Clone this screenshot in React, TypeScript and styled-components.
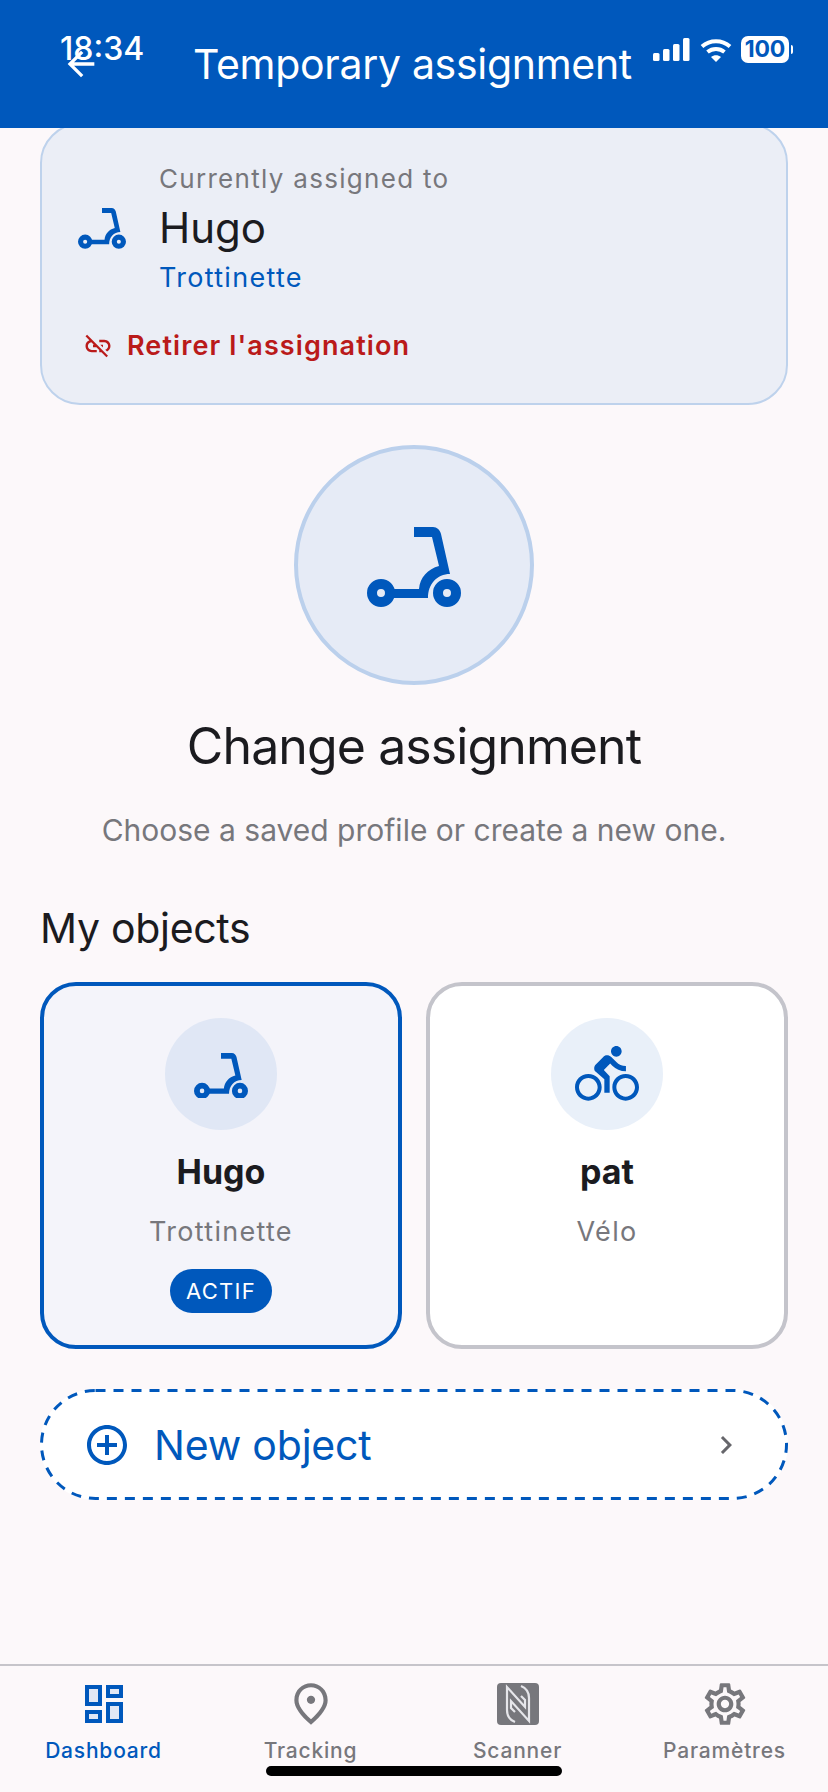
import { createGlobalStyle, styled } from "styled-components";
import {
  MdAddCircleOutline,
  MdArrowBack,
  MdChevronRight,
  MdDirectionsBike,
  MdLinkOff,
  MdOutlinePlace,
  MdOutlineSettings,
} from "react-icons/md";

const BLUE = "#0058bc";
const GREY = "#77777c";
const INK = "#1b1b1f";

const GlobalStyle = createGlobalStyle`
  html, body {
    margin: 0;
    padding: 0;
    background: #fcf8fa;
    font-family: Inter, "Noto Sans", sans-serif;
  }
`;

const Page = styled.div`
  position: relative;
  width: 828px;
  height: 1792px;
  overflow: hidden;
  display: flex;
  flex-direction: column;
  background: #fcf8fa;
`;

const Header = styled.header`
  position: relative;
  z-index: 2;
  flex: none;
  height: 128px;
  background: ${BLUE};
  display: flex;
  align-items: center;
  padding-left: 61px;
  color: #fff;
`;

const BackIcon = styled(MdArrowBack)`
  flex: none;
  width: 40px;
  height: 40px;
`;

const Title = styled.h1`
  margin: 0 0 0 92px;
  font-size: 41px;
  font-weight: 400;
  letter-spacing: -0.3px;
  white-space: nowrap;
`;

const StatusBar = styled.div`
  position: absolute;
  z-index: 3;
  top: 0;
  left: 0;
  right: 0;
  color: #fff;
`;

const Clock = styled.span`
  position: absolute;
  left: 60px;
  top: 30px;
  font-size: 32px;
  line-height: 38px;
  font-weight: 500;
`;

const StatusIcons = styled.div`
  position: absolute;
  left: 653px;
  top: 36px;
  display: flex;
  align-items: center;
  gap: 9px;
`;

const Battery = styled.span`
  position: relative;
  width: 48px;
  height: 27px;
  border-radius: 7px;
  background: #fff;
  color: ${BLUE};
  font-size: 23px;
  line-height: 27px;
  font-weight: 700;
  text-align: center;
  letter-spacing: -0.2px;

  &::after {
    content: "";
    position: absolute;
    right: -4px;
    top: 9px;
    width: 2px;
    height: 9px;
    border-radius: 0 2px 2px 0;
    background: #fff;
  }
`;

const Content = styled.main`
  flex: 1;
  display: flex;
  flex-direction: column;
  padding: 0 40px;
  min-height: 0;
`;

const CurrentCard = styled.section`
  flex: none;
  height: 282px;
  margin-top: -5px;
  box-sizing: border-box;
  padding: 38px 36px 0 36px;
  background: #ebeef6;
  border: 2px solid #bed2ec;
  border-radius: 40px;
`;

const CurrentRow = styled.div`
  display: flex;
  align-items: center;
  gap: 33px;
`;

const CurrentText = styled.div`
  display: flex;
  flex-direction: column;
`;

const CurrentLabel = styled.span`
  font-size: 26px;
  line-height: 32px;
  letter-spacing: 1.3px;
  color: ${GREY};
`;

const CurrentName = styled.span`
  font-size: 42px;
  line-height: 56px;
  margin-top: 5px;
  color: ${INK};
`;

const CurrentKind = styled.span`
  font-size: 27px;
  line-height: 32px;
  margin-top: 6px;
  letter-spacing: 1.3px;
  color: ${BLUE};
`;

const RemoveLink = styled.button`
  display: flex;
  align-items: center;
  gap: 14px;
  margin: 36px 0 0 5px;
  padding: 0;
  border: 0;
  background: none;
  font: inherit;
  font-size: 27px;
  line-height: 32px;
  font-weight: 600;
  letter-spacing: 1.1px;
  color: #ba1a1a;
`;

const Hero = styled.div`
  flex: none;
  align-self: center;
  width: 240px;
  height: 240px;
  margin-top: 40px;
  box-sizing: border-box;
  display: flex;
  align-items: center;
  justify-content: center;
  border: 4px solid #bbd0ec;
  border-radius: 50%;
  background: #e6ebf6;
  color: ${BLUE};
`;

const Heading = styled.h2`
  margin: 32px 0 0;
  font-size: 50px;
  line-height: 58px;
  font-weight: 400;
  letter-spacing: -0.9px;
  text-align: center;
  color: ${INK};
`;

const Subtitle = styled.p`
  margin: 37px 0 0;
  font-size: 30px;
  line-height: 36px;
  text-align: center;
  color: ${GREY};
`;

const SectionTitle = styled.h3`
  margin: 56px 0 0;
  font-size: 41px;
  line-height: 48px;
  font-weight: 400;
  letter-spacing: -0.3px;
  color: ${INK};
`;

const ObjectGrid = styled.div`
  display: grid;
  grid-template-columns: 1fr 1fr;
  gap: 24px;
  margin-top: 30px;
`;

const ObjectCard = styled.div<{ $active?: boolean }>`
  height: 367px;
  box-sizing: border-box;
  padding-top: 32px;
  display: flex;
  flex-direction: column;
  align-items: center;
  background: ${(p) => (p.$active ? "#f4f4fa" : "#fff")};
  border: 4px solid ${(p) => (p.$active ? BLUE : "#c4c4cb")};
  border-radius: 36px;
`;

const ObjectAvatar = styled.div<{ $active?: boolean }>`
  flex: none;
  width: 112px;
  height: 112px;
  display: flex;
  align-items: center;
  justify-content: center;
  border-radius: 50%;
  background: ${(p) => (p.$active ? "#e0e7f5" : "#e9f0f9")};
  color: ${BLUE};
`;

const ObjectName = styled.span`
  margin-top: 22px;
  font-size: 34px;
  line-height: 40px;
  font-weight: 700;
  color: ${INK};
`;

const ObjectKind = styled.span`
  margin-top: 20px;
  font-size: 27px;
  line-height: 40px;
  letter-spacing: 1.3px;
  color: ${GREY};
`;

const Badge = styled.span`
  margin-top: 17px;
  height: 44px;
  padding: 0 16px;
  display: flex;
  align-items: center;
  border-radius: 22px;
  background: ${BLUE};
  color: #fff;
  font-size: 22px;
  letter-spacing: 1.3px;
`;

const NewObject = styled.button`
  position: relative;
  flex: none;
  height: 111px;
  margin-top: 40px;
  padding: 0 44px 0 43px;
  display: flex;
  align-items: center;
  background: #fff;
  border: 0;
  border-radius: 56px;
  font: inherit;
  color: ${BLUE};
`;

// a css dashed border comes out too dense at this width, so the outline is drawn
const DashedOutline = styled.svg`
  position: absolute;
  inset: 0;
  width: 100%;
  height: 100%;
  pointer-events: none;
`;

const NewObjectLabel = styled.span`
  flex: 1;
  margin-left: 23px;
  text-align: left;
  font-size: 41px;
  letter-spacing: -0.2px;
`;

const BottomNav = styled.nav`
  flex: none;
  height: 128px;
  box-sizing: border-box;
  display: grid;
  grid-template-columns: repeat(4, 1fr);
  border-top: 2px solid #c6c4ca;
`;

const NavItem = styled.div<{ $active?: boolean }>`
  display: flex;
  flex-direction: column;
  align-items: center;
  padding-top: 17px;
  color: ${(p) => (p.$active ? BLUE : GREY)};
`;

const NavIconSlot = styled.div`
  height: 42px;
  display: flex;
  align-items: center;
  justify-content: center;
`;

const NavLabel = styled.span`
  margin-top: 12px;
  font-size: 21px;
  line-height: 28px;
  font-weight: 500;
  letter-spacing: 0.8px;
`;

const HomeBar = styled.div`
  position: absolute;
  left: 266px;
  top: 1766px;
  width: 296px;
  height: 10px;
  border-radius: 5px;
  background: #000;
`;

const ScooterSvg = styled.svg<{ $drop?: number }>`
  flex: none;
  margin-top: ${(p) => p.$drop ?? 0}px;
  color: ${BLUE};
`;

const ScooterIcon = ({ width, drop }: { width: number; drop?: number }) => (
  <ScooterSvg $drop={drop} width={width} height={(width * 80) / 94} viewBox="0 0 94 80" fill="currentColor">
    <path d="M47 0H66C70 0 73 3 74 7L83 47C70 47 61 57 61 71H20V62H52C53 50 61 42 72 39L65 10H47Z" />
    <circle cx="14" cy="66" r="9" fill="none" stroke="currentColor" strokeWidth="10" />
    <circle cx="80" cy="66" r="9" fill="none" stroke="currentColor" strokeWidth="10" />
  </ScooterSvg>
);

const SignalIcon = () => (
  <svg width="38" height="24" viewBox="0 0 38 24" fill="#fff">
    <rect x="0" y="15" width="6.5" height="8" rx="1.5" />
    <rect x="10" y="11" width="6.5" height="12" rx="1.5" />
    <rect x="20" y="6" width="6.5" height="17" rx="1.5" />
    <rect x="30" y="0" width="6.5" height="23" rx="1.5" />
  </svg>
);

const WifiIcon = () => (
  <svg width="32" height="24" viewBox="0 0 32 24" fill="none" stroke="#fff" strokeWidth="4">
    <path d="M2 8.5C10 1.5 22 1.5 30 8.5" />
    <path d="M7.5 14C12.5 10 19.5 10 24.5 14" />
    <path d="M16 24l-5-5c3-2.4 7-2.4 10 0z" fill="#fff" stroke="none" />
  </svg>
);

const DashboardIcon = () => (
  <svg width="38" height="38" viewBox="0 0 38 38" fill="#e2e8f5" stroke={BLUE} strokeWidth="4">
    <rect x="2" y="2" width="13" height="17" />
    <rect x="23" y="2" width="13" height="9" />
    <rect x="2" y="27" width="13" height="9" />
    <rect x="23" y="19" width="13" height="17" />
  </svg>
);

const NfcIcon = () => (
  <svg width="42" height="42" viewBox="0 0 42 42">
    <rect width="42" height="42" rx="4" fill={GREY} />
    <g fill="none" stroke="#e6e6ea" strokeWidth="2.2">
      <path d="M18 39C13 37 10 33 10 27V4L28 24V17L24 13" />
      <path d="M24 3C29 5 32 9 32 15V38L14 18V25L18 29" />
    </g>
  </svg>
);

export default function App() {
  return (
    <Page>
      <GlobalStyle />
      <Header>
        <BackIcon />
        <Title>Temporary assignment</Title>
      </Header>
      <StatusBar>
        <Clock>18:34</Clock>
        <StatusIcons>
          <SignalIcon />
          <WifiIcon />
          <Battery>100</Battery>
        </StatusIcons>
      </StatusBar>
      <Content>
        <CurrentCard>
          <CurrentRow>
            <ScooterIcon width={48} />
            <CurrentText>
              <CurrentLabel>Currently assigned to</CurrentLabel>
              <CurrentName>Hugo</CurrentName>
              <CurrentKind>Trottinette</CurrentKind>
            </CurrentText>
          </CurrentRow>
          <RemoveLink>
            <MdLinkOff size={30} />
            Retirer l'assignation
          </RemoveLink>
        </CurrentCard>
        <Hero>
          <ScooterIcon width={94} drop={3} />
        </Hero>
        <Heading>Change assignment</Heading>
        <Subtitle>Choose a saved profile or create a new one.</Subtitle>
        <SectionTitle>My objects</SectionTitle>
        <ObjectGrid>
          <ObjectCard $active>
            <ObjectAvatar $active>
              <ScooterIcon width={54} drop={3} />
            </ObjectAvatar>
            <ObjectName>Hugo</ObjectName>
            <ObjectKind>Trottinette</ObjectKind>
            <Badge>ACTIF</Badge>
          </ObjectCard>
          <ObjectCard>
            <ObjectAvatar>
              <MdDirectionsBike size={64} />
            </ObjectAvatar>
            <ObjectName>pat</ObjectName>
            <ObjectKind>Vélo</ObjectKind>
          </ObjectCard>
        </ObjectGrid>
        <NewObject>
          <DashedOutline>
            <rect
              x="1.5"
              y="1.5"
              width="745"
              height="108"
              rx="54"
              fill="none"
              stroke={BLUE}
              strokeWidth="3"
              strokeDasharray="10 8"
            />
          </DashedOutline>
          <MdAddCircleOutline size={48} />
          <NewObjectLabel>New object</NewObjectLabel>
          <MdChevronRight size={36} color="#66666b" />
        </NewObject>
      </Content>
      <BottomNav>
        <NavItem $active>
          <NavIconSlot>
            <DashboardIcon />
          </NavIconSlot>
          <NavLabel>Dashboard</NavLabel>
        </NavItem>
        <NavItem>
          <NavIconSlot>
            <MdOutlinePlace size={50} />
          </NavIconSlot>
          <NavLabel>Tracking</NavLabel>
        </NavItem>
        <NavItem>
          <NavIconSlot>
            <NfcIcon />
          </NavIconSlot>
          <NavLabel>Scanner</NavLabel>
        </NavItem>
        <NavItem>
          <NavIconSlot>
            <MdOutlineSettings size={50} />
          </NavIconSlot>
          <NavLabel>Paramètres</NavLabel>
        </NavItem>
      </BottomNav>
      <HomeBar />
    </Page>
  );
}
